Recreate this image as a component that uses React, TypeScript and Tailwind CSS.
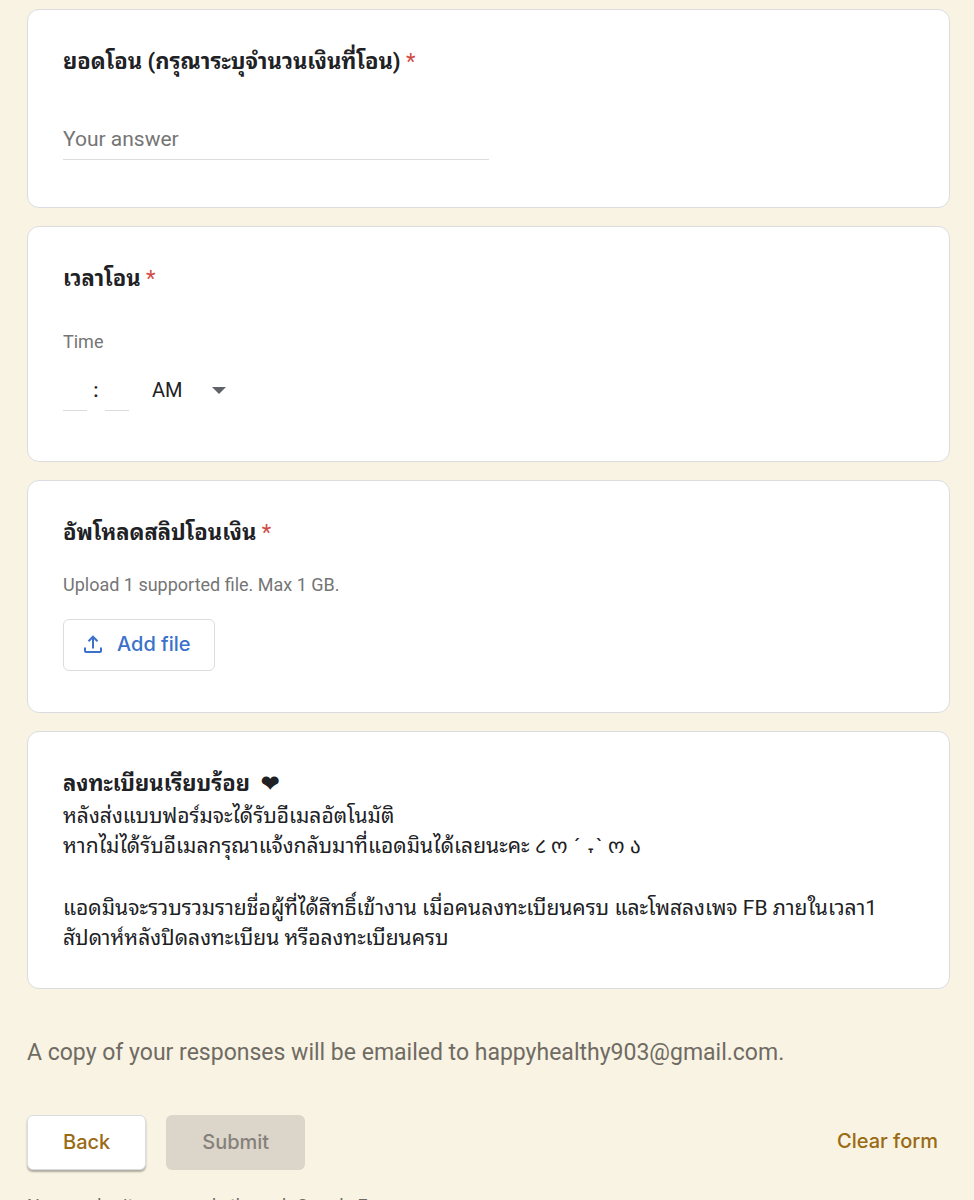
import type { ReactNode } from "react";

function Card({ children }: { children: ReactNode }) {
  return (
    <section className="rounded-xl border border-[#dadce0] bg-white px-[35px] pt-[35px]">
      {children}
    </section>
  );
}

function Required() {
  return <span className="font-normal text-[#d04b45]">{" *"}</span>;
}

function UploadIcon() {
  return (
    <svg viewBox="0 0 24 24" className="size-6" fill="none" stroke="currentColor" strokeWidth="2" aria-hidden="true">
      <path d="M12 16.500V5M7.500 9.200l4.500-4.500 4.500 4.500" />
      <path d="M4 15.500V19a1 1 0 0 0 1 1h14a1 1 0 0 0 1-1V15.500" />
    </svg>
  );
}

export default function App() {
  return (
    <main className="h-screen overflow-hidden bg-[#f9f3e3] pl-[27px] pr-6 pt-[9px] font-['Roboto','Noto_Sans_Thai_Looped','Loma','Garuda','Waree','Noto_Sans_Thai','Noto_Sans_Gujarati',sans-serif] text-[20px] text-[#202124]">
      <form className="flex flex-col" onSubmit={(e) => e.preventDefault()}>
        <div className="flex flex-col gap-[18px]">
          <Card>
            <label htmlFor="amount" className="block text-[22px] font-bold leading-[34px]">
              ยอดโอน (กรุณาระบุจำนวนเงินที่โอน)
              <Required />
            </label>
            <input
              id="amount"
              type="text"
              placeholder="Your answer"
              className="mb-[47px] mt-[39px] block h-[42px] w-1/2 border-b border-[#dadce0] text-[21px] outline-none placeholder:text-[#757575]"
            />
          </Card>

          <Card>
            <h2 className="text-[22px] font-bold leading-[34px]">
              เวลาโอน
              <Required />
            </h2>
            <p className="mt-[34px] text-[18px] leading-6 text-[#757575]">Time</p>
            <div className="mb-[50px] mt-[15px] flex h-[42px] items-stretch">
              <input aria-label="Hour" className="w-6 border-b border-[#dadce0] outline-none" />
              <span className="w-[18px] text-center font-medium leading-[42px]">:</span>
              <input aria-label="Minute" className="w-6 border-b border-[#dadce0] outline-none" />
              <div className="ml-[23px] grid w-[74px] items-center">
                <select aria-label="AM or PM" className="col-start-1 row-start-1 h-full w-full appearance-none bg-transparent text-[20px] outline-none">
                  <option>AM</option>
                  <option>PM</option>
                </select>
                <svg viewBox="0 0 14 7" className="pointer-events-none col-start-1 row-start-1 h-[7px] w-[14px] justify-self-end" aria-hidden="true">
                  <path d="M0 0h14L7 7z" fill="#5f6368" />
                </svg>
              </div>
            </div>
          </Card>

          <Card>
            <h2 className="text-[22px] font-bold leading-[34px]">
              อัพโหลดสลิปโอนเงิน
              <Required />
            </h2>
            <p className="mt-[23px] text-[18px] leading-6 text-[#757575]">Upload 1 supported file. Max 1 GB.</p>
            <button
              type="button"
              className="mb-[41px] mt-[22px] flex h-[52px] items-center gap-3 rounded-md border border-[#dadce0] pb-0.5 pl-[17px] pr-[23px] font-['Inter',sans-serif] font-medium text-[#3b71ca]"
            >
              <UploadIcon />
              Add file
            </button>
          </Card>

          <Card>
            <h2 className="text-[22px] font-bold leading-[34px]">ลงทะเบียนเรียบร้อย&nbsp; ❤︎</h2>
            <div className="mb-[35px] text-[21px] leading-[30px]">
              <p>หลังส่งแบบฟอร์มจะได้รับอีเมลอัตโนมัติ</p>
              <p>
                หากไม่ได้รับอีเมลกรุณาแจ้งกลับมาที่แอดมินได้เลยนะคะ ૮ ო ´ <span className="align-sub font-['DejaVu_Sans',sans-serif] leading-none">˕</span>` ო ა
              </p>
              <p className="mt-[31px]">
                แอดมินจะรวบรวมรายชื่อผู้ที่ได้สิทธิ์เข้างาน เมื่อคนลงทะเบียนครบ และโพสลงเพจ FB ภายในเวลา1
                สัปดาห์หลังปิดลงทะเบียน หรือลงทะเบียนครบ
              </p>
            </div>
          </Card>
        </div>

        <p className="mt-12 text-[23px] leading-8 text-[#6f6b63]">
          A copy of your responses will be emailed to happyhealthy903@gmail.com.
        </p>
        <div className="mt-[46px] flex items-center gap-5 font-['Inter',sans-serif] font-medium">
          <button type="button" className="h-[55px] rounded-md border border-[#dadce0] bg-white px-[35px] pb-0.5 text-[#9a6a14] shadow-[0_2px_2px_rgba(0,0,0,0.3)]">
            Back
          </button>
          <button type="submit" disabled className="h-[55px] rounded-md bg-[#dcd5c9] px-9 pb-0.5 text-[#85817a]">
            Submit
          </button>
          <button type="reset" className="ml-auto pb-1 pr-3 text-[#9a6a14]">
            Clear form
          </button>
        </div>
        <p className="mt-6 text-[18px] leading-6 text-[#6f6b63]">Never submit passwords through Google Forms.</p>
      </form>
    </main>
  );
}
